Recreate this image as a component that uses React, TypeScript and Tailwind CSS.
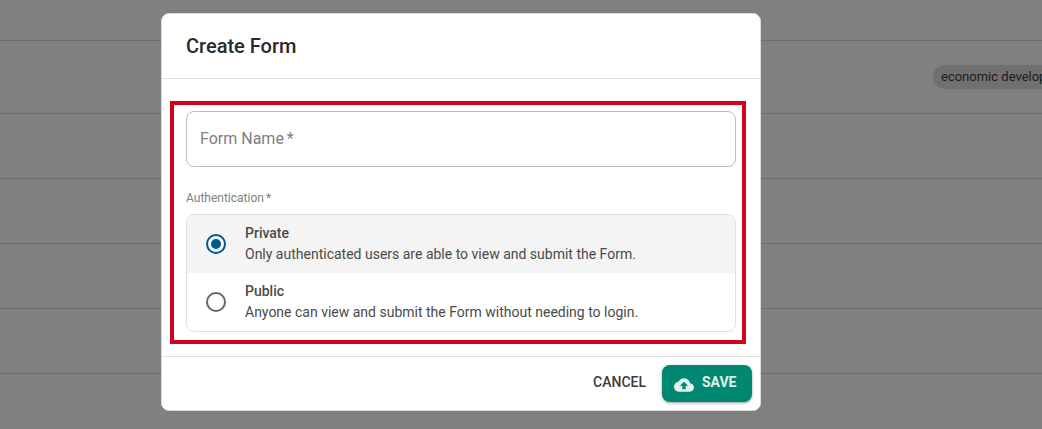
export default function App() {
  return (
    <div className="relative h-[429px] w-[1042px] overflow-hidden bg-[#808080] font-['Roboto',sans-serif]">
      <div className="flex flex-col">
        <div className="h-[41px] border-b border-[#6c6c6c]" />
        <div className="flex h-[73px] items-center overflow-hidden border-b border-[#6c6c6c]">
          <div className="ml-[933px] flex h-6 w-[160px] shrink-0 items-center rounded-full bg-[#707070] pl-2 text-[13px] whitespace-nowrap text-[#1c1c1c]">
            economic development
          </div>
        </div>
        <div className="h-[65px] border-b border-[#6c6c6c]" />
        <div className="h-[65px] border-b border-[#6c6c6c]" />
        <div className="h-[65px] border-b border-[#6c6c6c]" />
        <div className="h-[65px] border-b border-[#6c6c6c]" />
      </div>

      <div className="absolute top-[13px] left-[161px] flex h-[398px] w-[600px] flex-col rounded-[8px] border border-[#dddddd] bg-white">
        <div className="flex h-[65px] shrink-0 items-center border-b border-[#e0e0e0] pl-[24px] text-[20px] leading-none font-medium text-[#2a2a2a]">
          Create Form
        </div>
        <div className="flex-1 px-[8px] pt-[22px]">
          <div className="h-[243px] w-[576px] border-4 border-[#d0021b] px-3 pt-[6px]">
            <div className="flex h-[56px] w-[550px] items-center rounded-[8px] border border-[#bdbdbd] pl-[13px] text-[16px] text-[#808080]">
              Form Name<span className="ml-[3px]">*</span>
            </div>
            <div className="mt-[25px] h-[13px] text-[12px] leading-[13px] text-[#808080]">
              Authentication<span className="ml-[2px]">*</span>
            </div>
            <div className="mt-[9px] flex h-[118px] w-[550px] flex-col overflow-hidden rounded-[8px] border border-[#e0e0e0]">
              <div className="flex h-[58px] items-center bg-[#f4f4f4] pl-[19px]">
                <svg width="20" height="20" viewBox="0 0 20 20" className="shrink-0">
                  <circle cx="10" cy="10" r="9" fill="none" stroke="#005a8b" strokeWidth="2" />
                  <circle cx="10" cy="10" r="5" fill="#005a8b" />
                </svg>
                <div className="ml-[19px] pb-[2px]">
                  <div className="text-[14px] leading-[20px] font-medium text-[#4a4a4a]">Private</div>
                  <div className="mt-[1px] text-[14px] leading-[20px] text-[#4a4a4a]">Only authenticated users are able to view and submit the Form.</div>
                </div>
              </div>
              <div className="flex h-[58px] items-center pl-[19px]">
                <svg width="20" height="20" viewBox="0 0 20 20" className="shrink-0">
                  <circle cx="10" cy="10" r="9" fill="none" stroke="#666666" strokeWidth="2" />
                </svg>
                <div className="ml-[19px] pb-[2px]">
                  <div className="text-[14px] leading-[20px] font-medium text-[#4a4a4a]">Public</div>
                  <div className="mt-[1px] text-[14px] leading-[20px] text-[#4a4a4a]">Anyone can view and submit the Form without needing to login.</div>
                </div>
              </div>
            </div>
          </div>
        </div>
        <div className="flex h-[54px] shrink-0 items-center justify-end border-t border-[#e0e0e0] pr-[8px]">
          <div className="mr-[16px] pb-[2px] text-[14px] font-medium text-[#3c3c3c]">CANCEL</div>
          <div className="flex h-[37px] w-[90px] items-center rounded-[8px] bg-[#008870] pl-[12px] text-[14px] font-bold text-[#e0f0ec] shadow-[0_1px_3px_rgba(0,0,0,0.4)]">
            <svg width="20" height="20" viewBox="0 0 24 24" fill="currentColor" className="mt-[2px] shrink-0">
              <path d="M19.35 10.04C18.67 6.59 15.64 4 12 4 9.11 4 6.6 5.64 5.35 8.04 2.34 8.36 0 10.91 0 14c0 3.31 2.69 6 6 6h13c2.76 0 5-2.24 5-5 0-2.64-2.05-4.78-4.65-4.96zM14 13v4h-4v-4H7l5-5 5 5h-3z" />
            </svg>
            <span className="ml-[8px] pb-[2px]">SAVE</span>
          </div>
        </div>
      </div>
    </div>
  );
}
